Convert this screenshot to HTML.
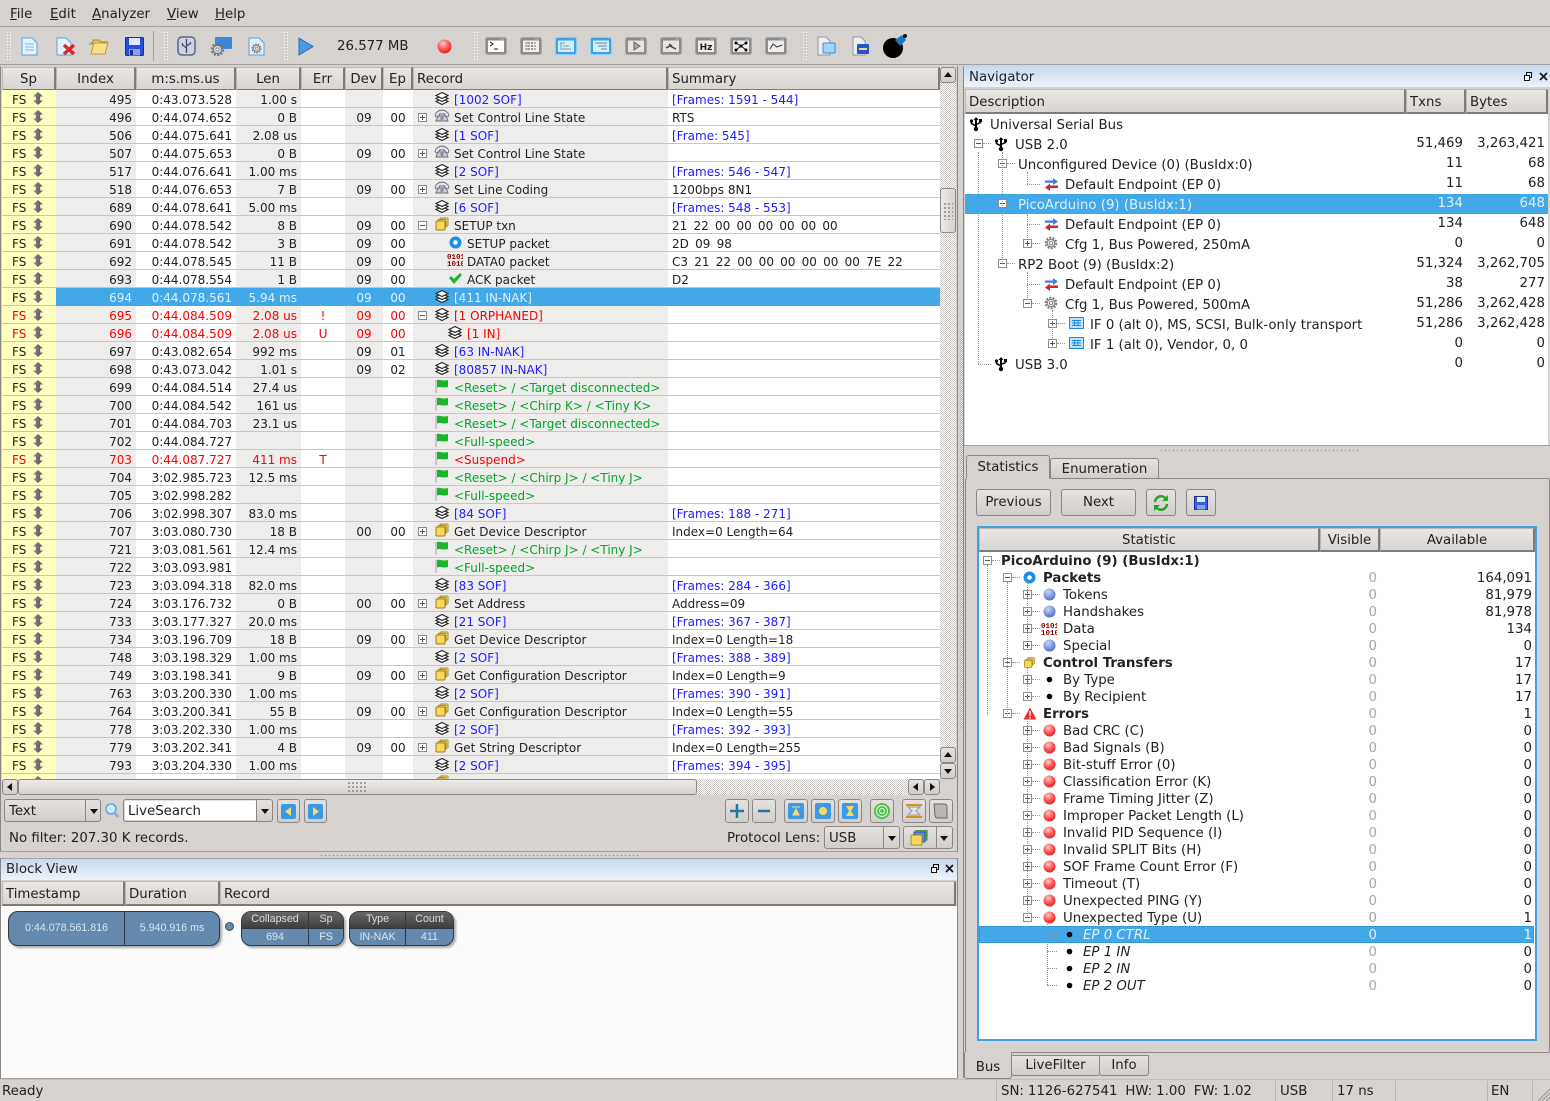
<!DOCTYPE html>
<html><head><meta charset="utf-8"><title>Protocol Analyzer</title>
<style>
*{box-sizing:border-box}
html,body{margin:0;padding:0}
body{width:1550px;height:1101px;overflow:hidden;position:relative;background:#d6d2cf;font:13.33px "DejaVu Sans",sans-serif;color:#222}
.a{position:absolute;white-space:nowrap}
.hd{position:absolute;height:24px;line-height:23px;background:linear-gradient(#e9e6e4,#d9d5d3);border:1px solid #8b8785;border-width:1px 2px 2px 1px;border-color:#bdb9b7 #7f7b79 #7f7b79 #bdb9b7;padding-left:3px;white-space:nowrap;overflow:hidden}
.ct{text-align:center;padding-left:0}
.btn{position:absolute;border:1px solid #8b8785;border-radius:3px;background:linear-gradient(#e4e1df,#d2cecc);text-align:center;white-space:nowrap}
.dith{position:absolute;background:repeating-conic-gradient(#c8c6c4 0 25%,#fff 0 50%) 0 0/2px 2px}
.grip{position:absolute;width:6px;background:radial-gradient(circle at 1.5px 1.5px,#fff 1px,#a5a19f 1.2px,transparent 1.6px) 0 0/3px 3px}
.dots{position:absolute;height:4px;background:radial-gradient(circle at 1.5px 1.5px,#9c9896 1px,#f4f4f4 1.2px,transparent 1.8px) 0 0/4px 4px}
.tb{position:absolute;background:#a3a09e;height:1px}
.arrU,.arrD,.arrL,.arrR{position:absolute;width:0;height:0;border:4px solid transparent}
.arrU{border-bottom:5px solid #111;border-top:0;left:3px;top:4px}
.arrD{border-top:5px solid #111;border-bottom:0;left:3px;top:5px}
.arrL{border-right:5px solid #111;border-left:0;left:4px;top:3px}
.arrR{border-left:5px solid #111;border-right:0;left:5px;top:3px}
#g{position:absolute;left:2px;top:90px;width:938px;height:689px;overflow:hidden;background:#fff}
#g table{border-collapse:separate;border-spacing:0;table-layout:fixed;width:938px;font-size:12px}
#g td{height:18px;padding:4px 0 0;line-height:13px;border-bottom:1px solid #c6c6c6;position:relative;white-space:nowrap;overflow:hidden;vertical-align:top}
#g td:nth-child(1){background:#ffffc0;padding-left:10px}
#g td:nth-child(2){background:#eeedec;text-align:right;padding-right:4px}
#g td:nth-child(3){text-align:right;padding-right:4px}
#g td:nth-child(4){background:#eeedec;text-align:right;padding-right:4px}
#g td:nth-child(5){text-align:center}
#g td:nth-child(6){background:#eeedec;text-align:center}
#g td:nth-child(7){text-align:center}
#g td:nth-child(8){background:#eeedec;padding-left:41px}
#g td:nth-child(9){padding-left:4px}
#g td.i2{padding-left:54px}
#g tr.red td{color:#f00}
#g tr.sel td:not(:first-child){background:#42a8e8;color:#e0f1fc;border-color:#42a8e8}
#g tr.sel .c{opacity:.95}
#g td.bl{color:#1d1dff}
#g td.gr{color:#00a82a}
#g td.h{word-spacing:2.4px}
s{position:absolute;left:31px;top:2px;width:10px;height:13px;background:linear-gradient(90deg,#888,#555);clip-path:polygon(50% 0,100% 35%,72% 35%,72% 65%,100% 65%,50% 100%,0 65%,28% 65%,28% 35%,0 35%)}
.c{position:absolute;left:21px;top:0;width:16px;height:16px}
.i2 .c{left:34px}
.c2{left:36px!important;top:2px;width:13px;height:13px}
.e{position:absolute;width:9px;height:9px;border:1px solid #8e8e8e;background:linear-gradient(#555,#555) center/5px 1px no-repeat,#fff;left:5px;top:5px;display:block}
.e.p{background:linear-gradient(#555,#555) center/5px 1px no-repeat,linear-gradient(#555,#555) center/1px 5px no-repeat,#fff}
.tk::after{content:"";position:absolute;left:8px;top:3px;width:8px;border-top:1px dotted #999}
.vl{position:absolute;border-left:1px dotted #8f8f8f;width:1px}
.hl{position:absolute;border-top:1px dotted #8f8f8f;height:1px}
#nav{position:absolute;left:965px;top:114px;width:583px;height:331px;background:#fff;overflow:hidden}
.nr{position:relative;height:20px;line-height:20px;white-space:nowrap}
.nr>span,.nr>svg,.nr>em,.nr>u{position:absolute}
.nr>span{top:2px}
.nr>em,.nr>u{font-style:normal;text-decoration:none;top:0;text-align:right}
.nr>u{right:85px}.nr>em{right:3px}
.nr>svg{top:2px}
.nr>.e{top:5px}
.nsel{background:#42a8e8;color:#e0f1fc}
#st{position:absolute;left:979px;top:552px;width:555px;height:486px;background:#fff;overflow:hidden}
.sr{position:relative;height:17px;line-height:16px;white-space:nowrap}
.sr>span,.sr>svg,.sr>em,.sr>u{position:absolute}
.sr>span,.sr>em,.sr>u{top:2px}
.sr>u{text-decoration:none;color:#a6a6a6;right:157px}
.sr>em{font-style:normal;right:2px}
.sr>svg{top:2px}
.sr>.e{top:4px;left:44px}
.sr>svg{left:64px}
.sr>span{left:84px}
.a1>.e{left:24px}.a1>svg{left:44px}.a1>span{left:64px;font-weight:bold}
.a0>.e{left:4px}.a0>span{left:22px;font-weight:bold}
.ep>span{left:104px;font-style:italic}
.ep>svg{left:84px}
.ssel{background:#42a8e8;color:#e0f1fc;outline:1px dotted #c05a20;outline-offset:-1px}
.ssel>u{color:#e0f1fc}
.tab{position:absolute;background:linear-gradient(#e4e1df,#d2cecc);border:1px solid #8b8785;border-radius:3px 3px 0 0;text-align:center;white-space:nowrap}
.blk{position:absolute;top:911px;height:35px;border:1px solid #2f3a45;border-radius:10px;background:#6489ae;box-shadow:2px 2px 2px #aaa;overflow:hidden;font:10.67px "Liberation Sans",sans-serif;color:#dbe6f0;white-space:nowrap}
.blk b{position:absolute;font-weight:normal;text-align:center;top:0;height:100%}
.blk .tp{position:absolute;left:0;right:0;top:0;height:17px;background:linear-gradient(#666,#3e3e3e);border-bottom:1px solid #2f3a45}
.blk i{position:absolute;top:0;bottom:0;width:1px;background:#2f3a45}
</style></head><body>
<svg width="0" height="0" style="position:absolute">
<defs>
<radialGradient id="gb" cx=".4" cy=".3" r=".8"><stop offset="0" stop-color="#c9d6f5"/><stop offset="1" stop-color="#3f62c4"/></radialGradient>
<radialGradient id="gr" cx=".4" cy=".3" r=".8"><stop offset="0" stop-color="#ffd0cc"/><stop offset=".5" stop-color="#f55"/><stop offset="1" stop-color="#d81818"/></radialGradient>
<symbol id="k" viewBox="0 0 16 16"><g fill="#fff" stroke="#222" stroke-width="1.100"><path d="M2 11.500l6-3 6 3-6 3z"/><path d="M2 8.500l6-3 6 3-6 3z"/><path d="M2 5.500l6-3 6 3-6 3z"/></g></symbol>
<symbol id="ph" viewBox="0 0 16 16"><path d="M1 7c1-3 4-5 7-5s6 2 7 5l-1 2-3-1-.5-2H5.500L5 8 2 9z" fill="#dfe5ea" stroke="#667" stroke-width=".9"/><path d="M4 8h8l2 5H2z" fill="#c8d0d6" stroke="#667" stroke-width=".9"/><circle cx="8" cy="10.500" r="1.600" fill="#889"/></symbol>
<symbol id="bx" viewBox="0 0 16 16"><rect x="6" y="2" width="8" height="8" rx="1" fill="#f5dd80" stroke="#a98a20"/><rect x="4" y="3.500" width="8" height="8" rx="1" fill="#f7e291" stroke="#a98a20"/><rect x="2" y="5" width="9" height="9" rx="1" fill="#fbd75a" stroke="#a07c10"/></symbol>
<symbol id="fg" viewBox="0 0 16 16"><path d="M2 2v13" stroke="#bbb" stroke-width="1.500"/><path d="M3 2c3-1 5 1.500 11 0v7c-5 1.500-8-1-11 .5z" fill="#1bb52a"/></symbol>
<symbol id="sp" viewBox="0 0 13 13"><circle cx="6.500" cy="6.500" r="6" fill="#1d8de8"/><circle cx="6.500" cy="6.500" r="2.300" fill="#fff"/></symbol>
<symbol id="ck" viewBox="0 0 13 13"><path d="M0 6l2-2 3 3 6-6 2 2-8 9z" fill="#1fb52a"/></symbol>
<symbol id="us" viewBox="0 0 14 16"><path d="M7 1l2.500 3H8v8h-2V4H4.500z" fill="#000"/><circle cx="7" cy="13" r="2.200" fill="#000"/><path d="M7 10L2.500 7.500V5.500M7 8.500l4.500-2V5" fill="none" stroke="#000" stroke-width="1.500"/><circle cx="2.500" cy="5" r="1.600" fill="#000"/><rect x="10" y="3" width="3" height="3" fill="#000"/></symbol>
<symbol id="ar" viewBox="0 0 15 16"><path d="M1 4.500h8V2l5 3.500-5 3.500V6.800H1z" fill="#3a7fdf"/><path d="M14 9.500H6V7.500L1 11.500l5 3.500v-3h8z" fill="#d9252a"/></symbol>
<symbol id="gg" viewBox="0 0 14 14"><circle cx="7" cy="7" r="5.300" fill="none" stroke="#777" stroke-width="2" stroke-dasharray="2 1.300"/><circle cx="7" cy="7" r="3.800" fill="#e6e6e6" stroke="#777"/><circle cx="7" cy="7" r="1.600" fill="#fff" stroke="#777" stroke-width=".8"/></symbol>
<symbol id="if" viewBox="0 0 15 14"><rect x=".5" y="1.500" width="14" height="11" fill="#bfe0ff" stroke="#1a8ae0"/><path d="M3 4.500h9M3 7h9M3 9.500h9M5.500 4v6M9 4v6" stroke="#1a8ae0"/></symbol>
<symbol id="bb" viewBox="0 0 13 13"><circle cx="6.500" cy="6.500" r="6" fill="url(#gb)"/></symbol>
<symbol id="br" viewBox="0 0 13 13"><circle cx="6.500" cy="6.500" r="6" fill="url(#gr)"/></symbol>
<symbol id="dt" viewBox="0 0 13 13"><circle cx="6.500" cy="6.500" r="2.800" fill="#000"/></symbol>
<symbol id="fm" viewBox="0 0 22 18"><rect x=".5" y=".5" width="21" height="17" rx="2" fill="#8f8d8b" stroke="#a9a7a5"/><circle cx="16" cy="2" r=".5" fill="#fff"/><circle cx="18" cy="2" r=".5" fill="#fff"/></symbol>
<symbol id="fb" viewBox="0 0 22 18"><rect x=".5" y=".5" width="21" height="17" rx="2" fill="#3aa3ee" stroke="#8accf5"/></symbol>
</defs></svg>

<!-- menu -->
<div class="a" style="left:10px;top:7px"><u>F</u>ile</div>
<div class="a" style="left:50px;top:7px"><u>E</u>dit</div>
<div class="a" style="left:92px;top:7px"><u>A</u>nalyzer</div>
<div class="a" style="left:167px;top:7px"><u>V</u>iew</div>
<div class="a" style="left:215px;top:7px"><u>H</u>elp</div>
<div class="tb" style="left:0;top:26px;width:1550px"></div>
<div class="tb" style="left:0;top:64px;width:1550px"></div>

<!-- toolbar -->
<div class="grip" style="left:6px;top:31px;height:30px"></div>
<svg class="a" style="left:21px;top:37px" width="17" height="19"><path d="M1 1h10l5 5v12H1z" fill="#e6f2fb" stroke="#55a7e3"/><path d="M4 7h9M4 10h9M4 13h9" stroke="#7ebbe8"/></svg>
<svg class="a" style="left:56px;top:37px" width="21" height="19"><path d="M1 1h9l5 5v12H1z" fill="#e6f2fb" stroke="#55a7e3"/><path d="M8 8l10 9M18 8L8 17" stroke="#d92a2a" stroke-width="3.500"/></svg>
<svg class="a" style="left:89px;top:36px" width="20" height="20"><path d="M1 8l3-2V4h6l2 2h6v2z" fill="#e8c860" stroke="#b08f20"/><path d="M2 18L5 7h14l-3 11z" fill="#f8e08a" stroke="#c09c20"/></svg>
<svg class="a" style="left:125px;top:37px" width="19" height="19"><rect x=".5" y=".5" width="18" height="18" rx="1" fill="#2a4fd8" stroke="#1a2f90"/><rect x="4" y="1" width="11" height="7" fill="#dfe7ff"/><rect x="4" y="12" width="11" height="6.500" fill="#8aa0ec"/><rect x="5" y="13" width="3" height="5" fill="#1a2f90"/></svg>
<div class="a" style="left:153px;top:31px;width:1px;height:30px;background:#a3a09e"></div>
<div class="grip" style="left:163px;top:31px;height:30px"></div>
<svg class="a" style="left:177px;top:36px" width="19" height="20"><rect x="1" y="1" width="17" height="18" rx="4" fill="#cdd2df" stroke="#5a6685" stroke-width="1.500"/><path d="M9.500 3v14M9.500 12L5.500 9V7M9.500 10l4-2.500V6" stroke="#3f4a68" fill="none" stroke-width="1.300"/></svg>
<svg class="a" style="left:210px;top:37px" width="22" height="20"><rect x="5" y="0" width="17" height="12" rx="1" fill="#3a86d8"/><use href="#gg" x="0" y="5" width="15" height="15"/></svg>
<svg class="a" style="left:248px;top:37px" width="17" height="19"><path d="M1 1h10l5 5v12H1z" fill="#e2eefa" stroke="#55a7e3"/><use href="#gg" x="3" y="6" width="11" height="11"/></svg>
<div class="grip" style="left:283px;top:31px;height:30px"></div>
<svg class="a" style="left:298px;top:37px" width="16" height="19"><path d="M1 1l14 8.500L1 18z" fill="#4a9ae8" stroke="#2a6cb8"/></svg>
<div class="a" style="left:337px;top:39px">26.577 MB</div>
<svg class="a" style="left:437px;top:39px" width="15" height="15"><circle cx="7.500" cy="7.500" r="7" fill="url(#gr)"/></svg>
<div class="grip" style="left:473px;top:31px;height:30px"></div>
<svg class="a" style="left:485px;top:37px" width="22" height="18"><use href="#fm"/><rect x="3" y="3.500" width="16" height="11.500" fill="#fff"/><path d="M5 5l3 2-3 2M9 12h4" stroke="#111" fill="none"/></svg>
<svg class="a" style="left:520px;top:37px" width="22" height="18"><use href="#fm"/><rect x="3" y="3.500" width="16" height="11.500" fill="#f0efee"/><path d="M5 6h12M5 9h12M5 12h12M8 5v9M12 5v9" stroke="#777" stroke-dasharray="2 1"/></svg>
<svg class="a" style="left:555px;top:37px" width="22" height="18"><use href="#fb"/><rect x="3" y="3.500" width="16" height="11.500" fill="#d8edfb"/><path d="M5 6h5M8 9h6M8 12h8M6 6v6h2" stroke="#7a9fb8" fill="none"/></svg>
<svg class="a" style="left:590px;top:37px" width="22" height="18"><use href="#fb"/><rect x="3" y="3.500" width="16" height="11.500" fill="#d8edfb"/><path d="M5 6h12M8 9h9M11 12h6" stroke="#7a9fb8" stroke-width="1.300"/></svg>
<svg class="a" style="left:625px;top:37px" width="22" height="18"><use href="#fm"/><rect x="3" y="3.500" width="16" height="11.500" fill="#e6e5e4"/><path d="M9 5l6 4-6 4z" fill="#aaa" stroke="#666"/></svg>
<svg class="a" style="left:660px;top:37px" width="22" height="18"><use href="#fm"/><rect x="3" y="3.500" width="16" height="11.500" fill="#e6e5e4"/><path d="M6 11l4-2 6 3M9 7l3 2" stroke="#444" stroke-width="1.500" fill="none"/></svg>
<svg class="a" style="left:695px;top:37px" width="22" height="18"><use href="#fm"/><rect x="3" y="3.500" width="16" height="11.500" fill="#eee"/><text x="11" y="13" text-anchor="middle" font-family="DejaVu Sans" font-weight="bold" font-size="9" fill="#222">Hz</text></svg>
<svg class="a" style="left:730px;top:37px" width="22" height="18"><use href="#fm"/><rect x="3" y="3.500" width="16" height="11.500" fill="#eee"/><path d="M6 6l5 3 5-3M6 13l5-4 5 4" stroke="#111" fill="none"/><circle cx="6" cy="6" r="1.500"/><circle cx="16" cy="6" r="1.500"/><circle cx="11" cy="9" r="1.500"/><circle cx="6" cy="13" r="1.500"/><circle cx="16" cy="13" r="1.500"/></svg>
<svg class="a" style="left:765px;top:37px" width="22" height="18"><use href="#fm"/><rect x="3" y="3.500" width="16" height="11.500" fill="#eee"/><path d="M5 12l3-5 4 3 5-2" stroke="#333" fill="none"/></svg>
<div class="grip" style="left:802px;top:31px;height:30px"></div>
<svg class="a" style="left:817px;top:36px" width="19" height="20"><path d="M1 1h8l4 4v14H1z" fill="#eee" stroke="#8a9aa8"/><rect x="6" y="7" width="12" height="10" rx="1" fill="#a5d2f5" stroke="#3a8ad8"/></svg>
<svg class="a" style="left:852px;top:36px" width="18" height="20"><path d="M1 1h8l4 4v14H1z" fill="#eee" stroke="#8a9aa8"/><rect x="5" y="8" width="12" height="10" rx="1" fill="#2a55c8"/><rect x="7" y="12" width="8" height="2" fill="#f3d680"/></svg>
<svg class="a" style="left:883px;top:33px" width="24" height="26"><circle cx="10" cy="15" r="10" fill="#000"/><path d="M12 7l7-5 4 5-6 6z" fill="#1f74c0"/><circle cx="22" cy="3" r="2" fill="#111"/></svg>

<!-- main list headers -->
<div class="hd ct" style="left:2px;top:67px;width:54px">Sp</div>
<div class="hd ct" style="left:56px;top:67px;width:80px">Index</div>
<div class="hd ct" style="left:136px;top:67px;width:100px">m:s.ms.us</div>
<div class="hd ct" style="left:236px;top:67px;width:65px">Len</div>
<div class="hd ct" style="left:301px;top:67px;width:44px">Err</div>
<div class="hd ct" style="left:345px;top:67px;width:38px">Dev</div>
<div class="hd ct" style="left:383px;top:67px;width:30px">Ep</div>
<div class="hd" style="left:413px;top:67px;width:255px">Record</div>
<div class="hd" style="left:668px;top:67px;width:272px">Summary</div>
<div class="a" style="left:0;top:66px;width:1px;height:786px;background:#8b8785"></div>
<div class="a" style="left:957px;top:66px;width:1px;height:786px;background:#8b8785"></div>

<div id="g"><table>
<colgroup><col style="width:54px"><col style="width:80px"><col style="width:100px"><col style="width:65px"><col style="width:44px"><col style="width:38px"><col style="width:30px"><col style="width:255px"><col style="width:272px"></colgroup>
<tr><td>FS<s></s><td>495<td>0:43.073.528<td>1.00 s<td><td><td><td class="bl"><svg class="c"><use href="#k"/></svg>[1002 SOF]<td class="bl">[Frames: 1591 - 544]
<tr><td>FS<s></s><td>496<td>0:44.074.652<td>0 B<td><td>09<td>00<td><i class="e p"></i><svg class="c"><use href="#ph"/></svg>Set Control Line State<td>RTS
<tr><td>FS<s></s><td>506<td>0:44.075.641<td>2.08 us<td><td><td><td class="bl"><svg class="c"><use href="#k"/></svg>[1 SOF]<td class="bl">[Frame: 545]
<tr><td>FS<s></s><td>507<td>0:44.075.653<td>0 B<td><td>09<td>00<td><i class="e p"></i><svg class="c"><use href="#ph"/></svg>Set Control Line State<td>
<tr><td>FS<s></s><td>517<td>0:44.076.641<td>1.00 ms<td><td><td><td class="bl"><svg class="c"><use href="#k"/></svg>[2 SOF]<td class="bl">[Frames: 546 - 547]
<tr><td>FS<s></s><td>518<td>0:44.076.653<td>7 B<td><td>09<td>00<td><i class="e p"></i><svg class="c"><use href="#ph"/></svg>Set Line Coding<td>1200bps 8N1
<tr><td>FS<s></s><td>689<td>0:44.078.641<td>5.00 ms<td><td><td><td class="bl"><svg class="c"><use href="#k"/></svg>[6 SOF]<td class="bl">[Frames: 548 - 553]
<tr><td>FS<s></s><td>690<td>0:44.078.542<td>8 B<td><td>09<td>00<td><i class="e"></i><svg class="c"><use href="#bx"/></svg>SETUP txn<td class="h">21 22 00 00 00 00 00 00
<tr><td>FS<s></s><td>691<td>0:44.078.542<td>3 B<td><td>09<td>00<td class="i2"><svg class="c c2"><use href="#sp"/></svg>SETUP packet<td class="h">2D 09 98
<tr><td>FS<s></s><td>692<td>0:44.078.545<td>11 B<td><td>09<td>00<td class="i2"><svg class="c" viewBox="0 0 16 16"><text x="0" y="7" font-family="Liberation Mono" font-weight="bold" font-size="7.500" fill="#8a0000">0101</text><text x="0" y="14" font-family="Liberation Mono" font-weight="bold" font-size="7.500" fill="#8a0000">1010</text></svg>DATA0 packet<td class="h">C3 21 22 00 00 00 00 00 00 7E 22
<tr><td>FS<s></s><td>693<td>0:44.078.554<td>1 B<td><td>09<td>00<td class="i2"><svg class="c c2"><use href="#ck"/></svg>ACK packet<td>D2
<tr class="sel"><td>FS<s></s><td>694<td>0:44.078.561<td>5.94 ms<td><td>09<td>00<td><svg class="c"><use href="#k"/></svg>[411 IN-NAK]<td>
<tr class="red"><td>FS<s></s><td>695<td>0:44.084.509<td>2.08 us<td>!<td>09<td>00<td><i class="e"></i><svg class="c"><use href="#k"/></svg>[1 ORPHANED]<td>
<tr class="red"><td>FS<s></s><td>696<td>0:44.084.509<td>2.08 us<td>U<td>09<td>00<td class="i2"><svg class="c"><use href="#k"/></svg>[1 IN]<td>
<tr><td>FS<s></s><td>697<td>0:43.082.654<td>992 ms<td><td>09<td>01<td class="bl"><svg class="c"><use href="#k"/></svg>[63 IN-NAK]<td>
<tr><td>FS<s></s><td>698<td>0:43.073.042<td>1.01 s<td><td>09<td>02<td class="bl"><svg class="c"><use href="#k"/></svg>[80857 IN-NAK]<td>
<tr><td>FS<s></s><td>699<td>0:44.084.514<td>27.4 us<td><td><td><td class="gr"><svg class="c"><use href="#fg"/></svg>&lt;Reset&gt; / &lt;Target disconnected&gt;<td>
<tr><td>FS<s></s><td>700<td>0:44.084.542<td>161 us<td><td><td><td class="gr"><svg class="c"><use href="#fg"/></svg>&lt;Reset&gt; / &lt;Chirp K&gt; / &lt;Tiny K&gt;<td>
<tr><td>FS<s></s><td>701<td>0:44.084.703<td>23.1 us<td><td><td><td class="gr"><svg class="c"><use href="#fg"/></svg>&lt;Reset&gt; / &lt;Target disconnected&gt;<td>
<tr><td>FS<s></s><td>702<td>0:44.084.727<td><td><td><td><td class="gr"><svg class="c"><use href="#fg"/></svg>&lt;Full-speed&gt;<td>
<tr class="red"><td>FS<s></s><td>703<td>0:44.087.727<td>411 ms<td>T<td><td><td><svg class="c"><use href="#fg"/></svg>&lt;Suspend&gt;<td>
<tr><td>FS<s></s><td>704<td>3:02.985.723<td>12.5 ms<td><td><td><td class="gr"><svg class="c"><use href="#fg"/></svg>&lt;Reset&gt; / &lt;Chirp J&gt; / &lt;Tiny J&gt;<td>
<tr><td>FS<s></s><td>705<td>3:02.998.282<td><td><td><td><td class="gr"><svg class="c"><use href="#fg"/></svg>&lt;Full-speed&gt;<td>
<tr><td>FS<s></s><td>706<td>3:02.998.307<td>83.0 ms<td><td><td><td class="bl"><svg class="c"><use href="#k"/></svg>[84 SOF]<td class="bl">[Frames: 188 - 271]
<tr><td>FS<s></s><td>707<td>3:03.080.730<td>18 B<td><td>00<td>00<td><i class="e p"></i><svg class="c"><use href="#bx"/></svg>Get Device Descriptor<td>Index=0 Length=64
<tr><td>FS<s></s><td>721<td>3:03.081.561<td>12.4 ms<td><td><td><td class="gr"><svg class="c"><use href="#fg"/></svg>&lt;Reset&gt; / &lt;Chirp J&gt; / &lt;Tiny J&gt;<td>
<tr><td>FS<s></s><td>722<td>3:03.093.981<td><td><td><td><td class="gr"><svg class="c"><use href="#fg"/></svg>&lt;Full-speed&gt;<td>
<tr><td>FS<s></s><td>723<td>3:03.094.318<td>82.0 ms<td><td><td><td class="bl"><svg class="c"><use href="#k"/></svg>[83 SOF]<td class="bl">[Frames: 284 - 366]
<tr><td>FS<s></s><td>724<td>3:03.176.732<td>0 B<td><td>00<td>00<td><i class="e p"></i><svg class="c"><use href="#bx"/></svg>Set Address<td>Address=09
<tr><td>FS<s></s><td>733<td>3:03.177.327<td>20.0 ms<td><td><td><td class="bl"><svg class="c"><use href="#k"/></svg>[21 SOF]<td class="bl">[Frames: 367 - 387]
<tr><td>FS<s></s><td>734<td>3:03.196.709<td>18 B<td><td>09<td>00<td><i class="e p"></i><svg class="c"><use href="#bx"/></svg>Get Device Descriptor<td>Index=0 Length=18
<tr><td>FS<s></s><td>748<td>3:03.198.329<td>1.00 ms<td><td><td><td class="bl"><svg class="c"><use href="#k"/></svg>[2 SOF]<td class="bl">[Frames: 388 - 389]
<tr><td>FS<s></s><td>749<td>3:03.198.341<td>9 B<td><td>09<td>00<td><i class="e p"></i><svg class="c"><use href="#bx"/></svg>Get Configuration Descriptor<td>Index=0 Length=9
<tr><td>FS<s></s><td>763<td>3:03.200.330<td>1.00 ms<td><td><td><td class="bl"><svg class="c"><use href="#k"/></svg>[2 SOF]<td class="bl">[Frames: 390 - 391]
<tr><td>FS<s></s><td>764<td>3:03.200.341<td>55 B<td><td>09<td>00<td><i class="e p"></i><svg class="c"><use href="#bx"/></svg>Get Configuration Descriptor<td>Index=0 Length=55
<tr><td>FS<s></s><td>778<td>3:03.202.330<td>1.00 ms<td><td><td><td class="bl"><svg class="c"><use href="#k"/></svg>[2 SOF]<td class="bl">[Frames: 392 - 393]
<tr><td>FS<s></s><td>779<td>3:03.202.341<td>4 B<td><td>09<td>00<td><i class="e p"></i><svg class="c"><use href="#bx"/></svg>Get String Descriptor<td>Index=0 Length=255
<tr><td>FS<s></s><td>793<td>3:03.204.330<td>1.00 ms<td><td><td><td class="bl"><svg class="c"><use href="#k"/></svg>[2 SOF]<td class="bl">[Frames: 394 - 395]
<tr><td><s></s><td><td><td><td><td><td><td><i class="e p"></i><svg class="c"><use href="#bx"/></svg><td>
</table></div>

<!-- vertical scrollbar -->
<div class="dith" style="left:940px;top:67px;width:16px;height:712px"></div>
<div class="btn" style="left:940px;top:67px;width:16px;height:16px"><i class="arrU"></i></div>
<div class="btn" style="left:940px;top:188px;width:16px;height:45px;background:linear-gradient(90deg,#eceae8,#d6d2d0)"><div style="position:absolute;left:2px;top:13px;width:10px;height:18px;background:radial-gradient(circle,#999 1px,transparent 1.2px) 0 0/4px 4px"></div></div>
<div class="btn" style="left:940px;top:747px;width:16px;height:16px"><i class="arrU"></i></div>
<div class="btn" style="left:940px;top:763px;width:16px;height:16px"><i class="arrD"></i></div>
<!-- horizontal scrollbar -->
<div class="a" style="left:940px;top:779px;width:17px;height:17px;background:#d6d2cf"></div>
<div class="dith" style="left:2px;top:779px;width:938px;height:16px"></div>
<div class="btn" style="left:2px;top:779px;width:16px;height:16px"><i class="arrL"></i></div>
<div class="btn" style="left:18px;top:779px;width:679px;height:16px;background:linear-gradient(#eceae8,#d6d2d0)"><div style="position:absolute;left:328px;top:1px;width:20px;height:12px;background:radial-gradient(circle,#999 1px,transparent 1.2px) 0 0/4px 4px"></div></div>
<div class="btn" style="left:908px;top:779px;width:16px;height:16px"><i class="arrL"></i></div>
<div class="btn" style="left:924px;top:779px;width:16px;height:16px"><i class="arrR"></i></div>

<!-- search row -->
<div class="btn" style="left:4px;top:799px;width:97px;height:23px;text-align:left;padding-left:4px;line-height:23px">Text<div style="position:absolute;right:14px;top:0;bottom:0;width:1px;background:#8b8785"></div><i class="arrD" style="left:85px;top:9px;border-top-color:#111"></i></div>
<svg class="a" style="left:105px;top:803px" width="15" height="16"><circle cx="6" cy="6" r="5" fill="#cfe8fb" stroke="#62a8e0" stroke-width="1.500"/><path d="M9.500 10l4 4" stroke="#a59ad8" stroke-width="2.500"/></svg>
<div class="btn" style="left:123px;top:799px;width:150px;height:23px;text-align:left;line-height:21px"><div style="position:absolute;left:1px;top:1px;bottom:1px;right:16px;background:#fff;padding-left:3px;line-height:21px">LiveSearch</div><div style="position:absolute;right:15px;top:0;bottom:0;width:1px;background:#8b8785"></div><i class="arrD" style="left:137px;top:9px"></i></div>
<div class="btn" style="left:277px;top:799px;width:23px;height:24px"><svg width="15" height="15" style="position:absolute;left:3px;top:4px"><rect width="15" height="15" rx="2" fill="#3a9ae8"/><path d="M10 3L4 7.500l6 4.500z" fill="#f8d860"/></svg></div>
<div class="btn" style="left:304px;top:799px;width:23px;height:24px"><svg width="15" height="15" style="position:absolute;left:3px;top:4px"><rect width="15" height="15" rx="2" fill="#3a9ae8"/><path d="M5 3l6 4.500L5 12z" fill="#f8d860"/></svg></div>
<div class="a" style="left:9px;top:831px">No filter: 207.30 K records.</div>

<div class="btn" style="left:725px;top:799px;width:24px;height:24px"><svg width="16" height="16" style="position:absolute;left:3px;top:3px"><path d="M8 1v14M1 8h14" stroke="#1e7a9e" stroke-width="2.500"/></svg></div>
<div class="btn" style="left:752px;top:799px;width:24px;height:24px"><svg width="16" height="16" style="position:absolute;left:3px;top:3px"><path d="M2 8h12" stroke="#1e7a9e" stroke-width="2.500"/></svg></div>
<div class="btn" style="left:784px;top:799px;width:24px;height:24px"><svg width="16" height="16" style="position:absolute;left:3px;top:3px"><rect width="16" height="16" rx="2" fill="#3a9ae8"/><path d="M4 4h8M5 12h6l-3-6z" stroke="#f8e090" fill="#f8d860"/></svg></div>
<div class="btn" style="left:811px;top:799px;width:24px;height:24px"><svg width="16" height="16" style="position:absolute;left:3px;top:3px"><rect width="16" height="16" rx="2" fill="#3a9ae8"/><circle cx="8" cy="8" r="4" fill="#f8d860"/></svg></div>
<div class="btn" style="left:838px;top:799px;width:24px;height:24px"><svg width="16" height="16" style="position:absolute;left:3px;top:3px"><rect width="16" height="16" rx="2" fill="#3a9ae8"/><path d="M4 3h8L9 8l3 5H4l3-5z" fill="#f8d860"/></svg></div>
<div class="btn" style="left:870px;top:799px;width:24px;height:24px"><svg width="18" height="18" style="position:absolute;left:2px;top:2px"><circle cx="9" cy="9" r="8" fill="#4cc04c"/><circle cx="9" cy="9" r="5.500" fill="none" stroke="#d8f5d8" stroke-width="1.200"/><circle cx="9" cy="9" r="2.500" fill="none" stroke="#d8f5d8" stroke-width="1.200"/></svg></div>
<div class="btn" style="left:902px;top:799px;width:24px;height:24px"><svg width="18" height="16" style="position:absolute;left:2px;top:3px"><path d="M1 2h16M1 14h16" stroke="#c89a20" stroke-width="2"/><path d="M3 4h12L11 8l4 4H3l4-4z" fill="#e8e4de" stroke="#999"/></svg></div>
<div class="btn" style="left:929px;top:799px;width:24px;height:24px"><svg width="18" height="18" style="position:absolute;left:2px;top:2px"><path d="M2 2h10c2 0 3 1 3 3v11H6c-2 0-3-1-3-3z" fill="#b8b8b8" stroke="#666"/></svg></div>
<div class="a" style="left:727px;top:831px">Protocol Lens:</div>
<div class="btn" style="left:824px;top:826px;width:76px;height:23px;text-align:left;padding-left:4px;line-height:23px">USB<div style="position:absolute;right:15px;top:0;bottom:0;width:1px;background:#8b8785"></div><i class="arrD" style="left:63px;top:9px"></i></div>
<div class="btn" style="left:903px;top:826px;width:50px;height:23px"><svg width="18" height="16" style="position:absolute;left:6px;top:3px"><rect x="6" y="0" width="11" height="10" fill="#5cb05c" stroke="#3a7a3a"/><rect x="4" y="2" width="11" height="10" fill="#5a8ad8" stroke="#2a5aa8"/><rect x="1" y="5" width="11" height="10" rx="1" fill="#f8d860" stroke="#a88a20"/></svg><div style="position:absolute;right:15px;top:0;bottom:0;width:1px;background:#8b8785"></div><i class="arrD" style="left:36px;top:9px"></i></div>

<!-- block view -->
<div class="tb" style="left:0;top:851px;width:958px"></div>
<div class="dots" style="left:320px;top:854px;width:320px"></div>
<div class="tb" style="left:0;top:858px;width:958px"></div>
<div class="a" style="left:1px;top:859px;width:956px;height:21px;background:linear-gradient(#c7d8ee,#edf3fa);padding-left:5px;line-height:22px">Block View</div>
<svg class="a" style="left:931px;top:864px" width="8" height="9"><rect x="2.500" y=".5" width="5" height="5" fill="none" stroke="#111"/><rect x=".5" y="3.500" width="5" height="5" fill="#fff" stroke="#111"/></svg>
<svg class="a" style="left:945px;top:864px" width="9" height="9"><path d="M1 1l7 7M8 1L1 8" stroke="#111" stroke-width="1.600"/></svg>
<div class="hd" style="left:2px;top:881px;width:123px;height:25px;line-height:25px">Timestamp</div>
<div class="hd" style="left:125px;top:881px;width:95px;height:25px;line-height:25px">Duration</div>
<div class="hd" style="left:220px;top:881px;width:736px;height:25px;line-height:25px">Record</div>
<div class="a" style="left:1px;top:906px;width:956px;height:172px;background:#fbfbfb"></div>
<div class="a" style="left:0;top:858px;width:1px;height:221px;background:#8b8785"></div>
<div class="a" style="left:957px;top:858px;width:1px;height:221px;background:#8b8785"></div>
<div class="tb" style="left:0;top:1078px;width:958px"></div>
<div class="blk" style="left:8px;width:212px"><i style="left:115px"></i><b style="left:0;width:115px;line-height:32px">0:44.078.561.816</b><b style="left:116px;width:94px;line-height:32px">5.940.916 ms</b></div>
<div class="a" style="left:225px;top:922px;width:9px;height:9px;border-radius:50%;background:#6489ae;border:1px solid #3a4a5a"></div>
<div class="blk" style="left:241px;width:103px"><div class="tp"></div><i style="left:66px"></i><b style="left:0;width:66px;line-height:15px;color:#ddd">Collapsed</b><b style="left:67px;width:34px;line-height:15px;color:#ddd">Sp</b><b style="left:0;width:66px;top:17px;height:16px;line-height:16px">694</b><b style="left:67px;width:34px;top:17px;height:16px;line-height:16px">FS</b></div>
<div class="blk" style="left:349px;width:105px"><div class="tp"></div><i style="left:55px"></i><b style="left:0;width:55px;line-height:15px;color:#ddd">Type</b><b style="left:56px;width:47px;line-height:15px;color:#ddd">Count</b><b style="left:0;width:55px;top:17px;height:16px;line-height:16px">IN-NAK</b><b style="left:56px;width:47px;top:17px;height:16px;line-height:16px">411</b></div>

<!-- splitter -->
<div class="a" style="left:960px;top:330px;width:3px;height:400px;background:repeating-conic-gradient(#aaa 0 25%,#eee 0 50%) 0 0/2px 2px"></div>
<div class="a" style="left:963px;top:66px;width:1px;height:1012px;background:#8b8785"></div>

<!-- navigator -->
<div class="a" style="left:964px;top:66px;width:586px;height:21px;background:linear-gradient(#c7d8ee,#edf3fa);padding-left:5px;line-height:23px">Navigator</div>
<svg class="a" style="left:1524px;top:72px" width="8" height="9"><rect x="2.500" y=".5" width="5" height="5" fill="none" stroke="#111"/><rect x=".5" y="3.500" width="5" height="5" fill="#fff" stroke="#111"/></svg>
<svg class="a" style="left:1539px;top:72px" width="9" height="9"><path d="M1 1l7 7M8 1L1 8" stroke="#111" stroke-width="1.600"/></svg>
<div class="hd" style="left:965px;top:89px;width:441px;height:25px;line-height:25px">Description</div>
<div class="hd" style="left:1406px;top:89px;width:60px;height:25px;line-height:25px">Txns</div>
<div class="hd" style="left:1466px;top:89px;width:82px;height:25px;line-height:25px">Bytes</div>
<div id="nav">
<div class="nr"><svg style="left:4px" width="14" height="16"><use href="#us"/></svg><span style="left:25px">Universal Serial Bus</span></div>
<div class="nr"><i class="e tk" style="left:9px"></i><svg style="left:29px" width="14" height="16"><use href="#us"/></svg><span style="left:50px">USB 2.0</span><u>51,469</u><em>3,263,421</em></div>
<div class="nr"><i class="e tk" style="left:33px"></i><span style="left:53px">Unconfigured Device (0) (BusIdx:0)</span><u>11</u><em>68</em></div>
<div class="nr"><svg style="left:79px" width="15" height="16"><use href="#ar"/></svg><span style="left:100px">Default Endpoint (EP 0)</span><u>11</u><em>68</em></div>
<div class="nr nsel"><i class="e tk" style="left:33px"></i><span style="left:53px">PicoArduino (9) (BusIdx:1)</span><u>134</u><em>648</em></div>
<div class="nr"><svg style="left:79px" width="15" height="16"><use href="#ar"/></svg><span style="left:100px">Default Endpoint (EP 0)</span><u>134</u><em>648</em></div>
<div class="nr"><i class="e p tk" style="left:58px"></i><svg style="left:79px" width="14" height="14"><use href="#gg"/></svg><span style="left:100px">Cfg 1, Bus Powered, 250mA</span><u>0</u><em>0</em></div>
<div class="nr"><i class="e tk" style="left:33px"></i><span style="left:53px">RP2 Boot (9) (BusIdx:2)</span><u>51,324</u><em>3,262,705</em></div>
<div class="nr"><svg style="left:79px" width="15" height="16"><use href="#ar"/></svg><span style="left:100px">Default Endpoint (EP 0)</span><u>38</u><em>277</em></div>
<div class="nr"><i class="e tk" style="left:58px"></i><svg style="left:79px" width="14" height="14"><use href="#gg"/></svg><span style="left:100px">Cfg 1, Bus Powered, 500mA</span><u>51,286</u><em>3,262,428</em></div>
<div class="nr"><i class="e p tk" style="left:83px"></i><svg style="left:104px" width="15" height="14"><use href="#if"/></svg><span style="left:125px">IF 0 (alt 0), MS, SCSI, Bulk-only transport</span><u>51,286</u><em>3,262,428</em></div>
<div class="nr"><i class="e p tk" style="left:83px"></i><svg style="left:104px" width="15" height="14"><use href="#if"/></svg><span style="left:125px">IF 1 (alt 0), Vendor, 0, 0</span><u>0</u><em>0</em></div>
<div class="nr"><svg style="left:29px" width="14" height="16"><use href="#us"/></svg><span style="left:50px">USB 3.0</span><u>0</u><em>0</em></div>
<div class="vl" style="left:13px;top:38px;height:212px"></div><div class="hl" style="left:13px;top:250px;width:13px"></div>
<div class="vl" style="left:37px;top:38px;height:112px"></div>
<div class="vl" style="left:62px;top:58px;height:12px"></div><div class="hl" style="left:62px;top:70px;width:13px"></div>
<div class="vl" style="left:62px;top:100px;height:24px"></div><div class="hl" style="left:62px;top:110px;width:13px"></div>
<div class="vl" style="left:62px;top:158px;height:26px"></div><div class="hl" style="left:62px;top:170px;width:13px"></div>
<div class="vl" style="left:87px;top:196px;height:30px"></div>
</div>
<div class="tb" style="left:964px;top:445px;width:586px"></div>
<div class="dots" style="left:1160px;top:449px;width:200px"></div>

<!-- statistics panel -->
<div class="a" style="left:965px;top:478px;width:585px;height:575px;border:1px solid #8b8785;border-radius:2px"></div>
<div class="tab" style="left:1050px;top:458px;width:109px;height:21px;line-height:21px">Enumeration</div>
<div class="tab" style="left:966px;top:455px;width:84px;height:24px;line-height:24px;background:#d6d2cf;border-bottom-color:#d6d2cf">Statistics</div>
<div class="btn" style="left:976px;top:489px;width:75px;height:27px;line-height:26px">Previous</div>
<div class="btn" style="left:1061px;top:489px;width:75px;height:27px;line-height:26px">Next</div>
<div class="btn" style="left:1146px;top:489px;width:30px;height:27px"><svg width="16" height="18" style="position:absolute;left:6px;top:4px"><path d="M2 8a6 6 0 0 1 11-3M14 10a6 6 0 0 1-11 3" fill="none" stroke="#2ca02c" stroke-width="2.500"/><path d="M15 1v6h-6zM1 17v-6h6z" fill="#2ca02c"/></svg></div>
<div class="btn" style="left:1186px;top:489px;width:30px;height:27px"><svg width="14" height="14" style="position:absolute;left:7px;top:6px"><rect x=".5" y=".5" width="13" height="13" fill="#3a5fe0" stroke="#1a2f90"/><rect x="3" y="1" width="8" height="5" fill="#dfe7ff"/><rect x="3" y="9" width="8" height="4.500" fill="#8aa0ec"/></svg></div>
<div class="a" style="left:977px;top:526px;width:560px;height:515px;border:2px solid #42a0de;background:#fff"></div>
<div class="hd ct" style="left:979px;top:528px;width:341px;height:24px">Statistic</div>
<div class="hd ct" style="left:1320px;top:528px;width:60px;height:24px">Visible</div>
<div class="hd ct" style="left:1380px;top:528px;width:155px;height:24px">Available</div>
<div id="st">
<div class="sr a0"><i class="e tk"></i><span>PicoArduino (9) (BusIdx:1)</span></div>
<div class="sr a1"><i class="e tk"></i><svg width="13" height="13"><use href="#sp"/></svg><span>Packets</span><u>0</u><em>164,091</em></div>
<div class="sr"><i class="e p tk"></i><svg width="13" height="13"><use href="#bb"/></svg><span>Tokens</span><u>0</u><em>81,979</em></div>
<div class="sr"><i class="e p tk"></i><svg width="13" height="13"><use href="#bb"/></svg><span>Handshakes</span><u>0</u><em>81,978</em></div>
<div class="sr"><i class="e p tk"></i><svg width="16" height="16" style="left:62px;top:1px"><text x="0" y="7" font-family="Liberation Mono" font-weight="bold" font-size="7.500" fill="#8a0000">0101</text><text x="0" y="14" font-family="Liberation Mono" font-weight="bold" font-size="7.500" fill="#8a0000">1010</text></svg><span>Data</span><u>0</u><em>134</em></div>
<div class="sr"><i class="e p tk"></i><svg width="13" height="13"><use href="#bb"/></svg><span>Special</span><u>0</u><em>0</em></div>
<div class="sr a1"><i class="e tk"></i><svg width="13" height="13" viewBox="0 0 16 16"><use href="#bx"/></svg><span>Control Transfers</span><u>0</u><em>17</em></div>
<div class="sr"><i class="e p tk"></i><svg width="13" height="13"><use href="#dt"/></svg><span>By Type</span><u>0</u><em>17</em></div>
<div class="sr"><i class="e p tk"></i><svg width="13" height="13"><use href="#dt"/></svg><span>By Recipient</span><u>0</u><em>17</em></div>
<div class="sr a1"><i class="e tk"></i><svg width="14" height="13"><path d="M7 .5L13.500 12.500H.5z" fill="#e83030"/><path d="M7 4v5M7 10v1.500" stroke="#fff" stroke-width="1.400"/></svg><span>Errors</span><u>0</u><em>1</em></div>
<div class="sr"><i class="e p tk"></i><svg width="13" height="13"><use href="#br"/></svg><span>Bad CRC (C)</span><u>0</u><em>0</em></div>
<div class="sr"><i class="e p tk"></i><svg width="13" height="13"><use href="#br"/></svg><span>Bad Signals (B)</span><u>0</u><em>0</em></div>
<div class="sr"><i class="e p tk"></i><svg width="13" height="13"><use href="#br"/></svg><span>Bit-stuff Error (0)</span><u>0</u><em>0</em></div>
<div class="sr"><i class="e p tk"></i><svg width="13" height="13"><use href="#br"/></svg><span>Classification Error (K)</span><u>0</u><em>0</em></div>
<div class="sr"><i class="e p tk"></i><svg width="13" height="13"><use href="#br"/></svg><span>Frame Timing Jitter (Z)</span><u>0</u><em>0</em></div>
<div class="sr"><i class="e p tk"></i><svg width="13" height="13"><use href="#br"/></svg><span>Improper Packet Length (L)</span><u>0</u><em>0</em></div>
<div class="sr"><i class="e p tk"></i><svg width="13" height="13"><use href="#br"/></svg><span>Invalid PID Sequence (I)</span><u>0</u><em>0</em></div>
<div class="sr"><i class="e p tk"></i><svg width="13" height="13"><use href="#br"/></svg><span>Invalid SPLIT Bits (H)</span><u>0</u><em>0</em></div>
<div class="sr"><i class="e p tk"></i><svg width="13" height="13"><use href="#br"/></svg><span>SOF Frame Count Error (F)</span><u>0</u><em>0</em></div>
<div class="sr"><i class="e p tk"></i><svg width="13" height="13"><use href="#br"/></svg><span>Timeout (T)</span><u>0</u><em>0</em></div>
<div class="sr"><i class="e p tk"></i><svg width="13" height="13"><use href="#br"/></svg><span>Unexpected PING (Y)</span><u>0</u><em>0</em></div>
<div class="sr"><i class="e tk"></i><svg width="13" height="13"><use href="#br"/></svg><span>Unexpected Type (U)</span><u>0</u><em>1</em></div>
<div class="sr ep ssel"><svg width="13" height="13"><use href="#dt"/></svg><span>EP 0 CTRL</span><u>0</u><em>1</em></div>
<div class="sr ep"><svg width="13" height="13"><use href="#dt"/></svg><span>EP 1 IN</span><u>0</u><em>0</em></div>
<div class="sr ep"><svg width="13" height="13"><use href="#dt"/></svg><span>EP 2 IN</span><u>0</u><em>0</em></div>
<div class="sr ep"><svg width="13" height="13"><use href="#dt"/></svg><span>EP 2 OUT</span><u>0</u><em>0</em></div>
<div class="vl" style="left:8px;top:13px;height:150px"></div>
<div class="vl" style="left:28px;top:30px;height:136px"></div>
<div class="vl" style="left:48px;top:30px;height:60px"></div>
<div class="vl" style="left:48px;top:115px;height:30px"></div>
<div class="vl" style="left:48px;top:166px;height:200px"></div>
<div class="vl" style="left:68px;top:370px;height:63px"></div>
<div class="hl" style="left:68px;top:382px;width:10px"></div><div class="hl" style="left:68px;top:399px;width:10px"></div><div class="hl" style="left:68px;top:416px;width:10px"></div><div class="hl" style="left:68px;top:433px;width:10px"></div>
</div>

<!-- bottom tabs -->
<div class="tab" style="left:1011px;top:1055px;width:89px;height:21px;line-height:19px;border-radius:0 0 3px 3px">LiveFilter</div>
<div class="tab" style="left:1099px;top:1055px;width:50px;height:21px;line-height:19px;border-radius:0 0 3px 3px">Info</div>
<div class="tab" style="left:964px;top:1052px;width:48px;height:27px;line-height:26px;padding-top:2px;background:#d6d2cf;border-top-color:#d6d2cf;border-radius:0 0 3px 3px">Bus</div>

<!-- status bar -->
<div class="tb" style="left:0;top:1079px;width:1550px;background:#c2bebc"></div>
<div class="a" style="left:2px;top:1084px">Ready</div>
<div class="a" style="left:1001px;top:1084px;word-spacing:-.3px">SN: 1126-627541&nbsp; HW: 1.00&nbsp; FW: 1.02</div>
<div class="a" style="left:1280px;top:1084px">USB</div>
<div class="a" style="left:1337px;top:1084px">17 ns</div>
<div class="a" style="left:1491px;top:1084px">EN</div>
<div class="a" style="left:996px;top:1081px;width:1px;height:20px;background:#bab6b4"></div>
<div class="a" style="left:1275px;top:1081px;width:1px;height:20px;background:#bab6b4"></div>
<div class="a" style="left:1332px;top:1081px;width:1px;height:20px;background:#bab6b4"></div>
<div class="a" style="left:1395px;top:1081px;width:1px;height:20px;background:#bab6b4"></div>
<div class="a" style="left:1487px;top:1081px;width:1px;height:20px;background:#bab6b4"></div>
<div class="a" style="left:1532px;top:1081px;width:1px;height:20px;background:#bab6b4"></div>
<svg class="a" style="left:1537px;top:1088px" width="13" height="13"><path d="M13 1L1 13M13 5L5 13M13 9l-4 4" stroke="#9a9694"/></svg>
</body></html>
